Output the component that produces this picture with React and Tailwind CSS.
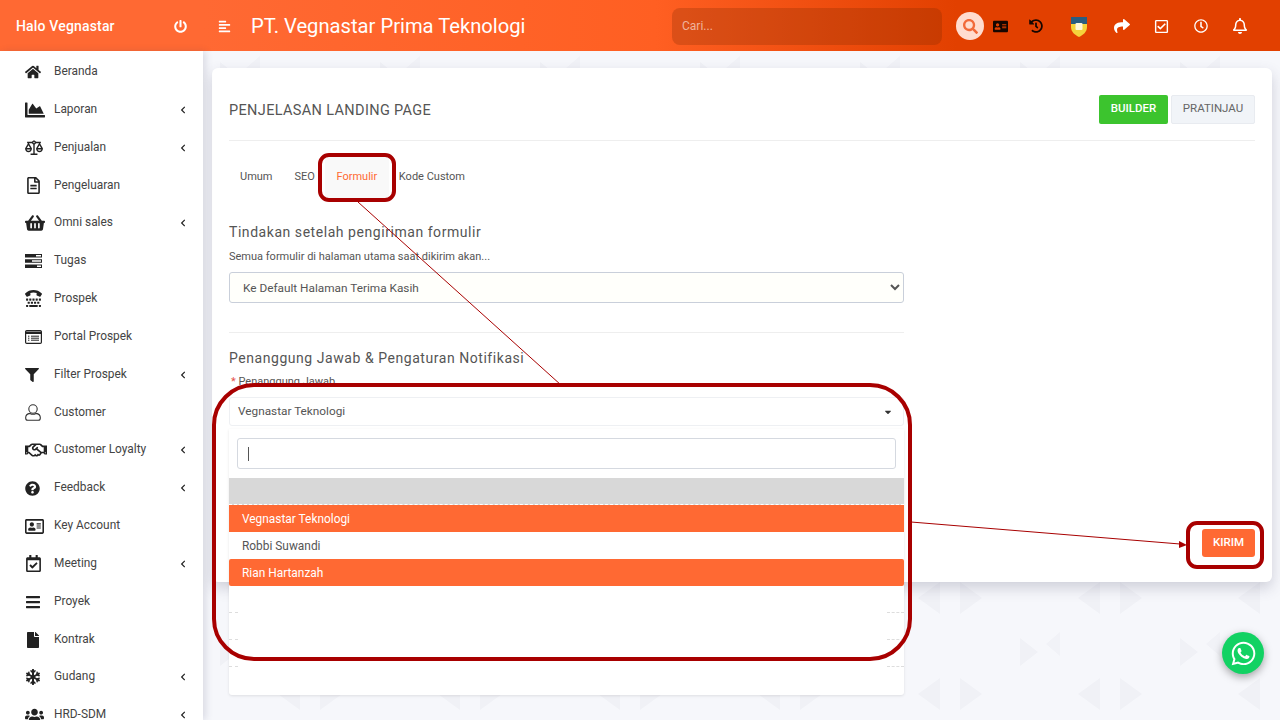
import {
  FaHome, FaChartArea, FaRegFileAlt, FaShoppingBasket, FaTty, FaFilter, FaRegHandshake,
  FaQuestionCircle, FaRegAddressCard, FaRegCalendarCheck, FaBars, FaFile, FaSnowflake,
  FaUsers, FaChevronLeft, FaPowerOff, FaAlignLeft, FaSearch, FaAddressCard, FaHistory,
  FaShare, FaRegCheckSquare, FaRegClock, FaRegBell, FaWhatsapp, FaCaretDown,
} from "react-icons/fa";
import { LiaBalanceScaleSolid } from "react-icons/lia";

// stacked bars with a notch, the "Tugas" icon
const TasksIcon = ({ className }) => (
  <svg className={className} width="17" height="14" viewBox="0 0 17 14" fill="#222">
    <path d="M0 0h17v3.6H0zM0 5.2h17v3.6H0zM0 10.4h17V14H0z" />
    <path d="M11 1h5v1.6h-5zM7 6.2h9v1.6H7zM12 11.4h4V13h-4z" fill="#fff" />
  </svg>
);

const PortalIcon = ({ className }) => (
  <svg className={className} width="17" height="14" viewBox="0 0 17 14">
    <rect x="0.6" y="0.6" width="15.8" height="12.8" rx="1.2" fill="#fff" stroke="#222" strokeWidth="1.2" />
    <path d="M0.6 1.6h15.8v2.4H0.6z" fill="#222" />
    <path d="M3 6.2h1.4M3 8.2h1.4M3 10.2h1.4M6 6.2h8M6 8.2h8M6 10.2h8" stroke="#222" strokeWidth="1" />
  </svg>
);

const UserIcon = ({ className }) => (
  <svg className={className} width="16" height="17" viewBox="0 0 16 17" fill="none" stroke="#333" strokeWidth="1.1">
    <circle cx="8" cy="5" r="4.2" />
    <path d="M5 9.4C2.5 9.8.7 11.4.7 13.6v.7c0 1.2.9 2 2 2h10.6c1.1 0 2-.8 2-2v-.7c0-2.2-1.8-3.800-4.300-4.200-1.800 1-4.200 1-6 0z" />
  </svg>
);

const menu = [
  { label: "Beranda", icon: FaHome, size: "text-[16px]" },
  { label: "Laporan", icon: FaChartArea, size: "text-[20px]", sub: true },
  { label: "Penjualan", icon: LiaBalanceScaleSolid, size: "text-[22px] -ml-[2px]", sub: true },
  { label: "Pengeluaran", icon: FaRegFileAlt, size: "text-[17px]" },
  { label: "Omni sales", icon: FaShoppingBasket, size: "text-[20px]", sub: true },
  { label: "Tugas", icon: TasksIcon, size: "" },
  { label: "Prospek", icon: FaTty, size: "text-[17px]" },
  { label: "Portal Prospek", icon: PortalIcon, size: "" },
  { label: "Filter Prospek", icon: FaFilter, size: "text-[14px]", sub: true },
  { label: "Customer", icon: UserIcon, size: "" },
  { label: "Customer Loyalty", icon: FaRegHandshake, size: "text-[22px]", sub: true },
  { label: "Feedback", icon: FaQuestionCircle, size: "text-[15px]", sub: true },
  { label: "Key Account", icon: FaRegAddressCard, size: "text-[19px]" },
  { label: "Meeting", icon: FaRegCalendarCheck, size: "text-[17px]", sub: true },
  { label: "Proyek", icon: FaBars, size: "text-[16px]" },
  { label: "Kontrak", icon: FaFile, size: "text-[16px]" },
  { label: "Gudang", icon: FaSnowflake, size: "text-[16px]", sub: true },
  { label: "HRD-SDM", icon: FaUsers, size: "text-[19px]", sub: true },
];

const tabs = ["Umum", "SEO", "Formulir", "Kode Custom"];

const Sidebar = () => (
  <aside className="w-[203px] shrink-0 flex flex-col z-10">
    <div className="h-[51px] shrink-0 bg-[#ff6933] flex items-center justify-between pl-4 pr-[16px] pt-[2px]">
      <span className="text-[14px] font-medium text-[#fff] tracking-[0.17px]">Halo Vegnastar</span>
      <FaPowerOff className="text-[13px] text-[#fff]" />
    </div>
    <nav className="flex-1 bg-white pt-[2px] overflow-hidden shadow-[3px_0_7px_rgba(60,60,90,0.14)]">
      {menu.map((item) => (
        <div key={item.label} className="h-[37.85px] flex items-center pl-[25px] pr-4">
          <span className="w-[29px] shrink-0 flex items-center">
            <item.icon className={`${item.size} text-[#222]`} />
          </span>
          <span className="text-[11.9px] text-[#444] flex-1">{item.label}</span>
          {item.sub && <FaChevronLeft className="text-[8px] text-[#222]" />}
        </div>
      ))}
    </nav>
  </aside>
);

const Topbar = () => (
  <header className="h-[51px] shrink-0 flex items-center bg-[linear-gradient(90deg,#ff6933_0%,#ff5f22_42%,#e24000_70%)] pl-[15px]">
    <FaAlignLeft className="text-[13px] text-white mr-[20px] mt-[1px]" />
    <h1 className="text-[20.2px] text-white font-normal w-[421px] mt-[2px]">PT. Vegnastar Prima Teknologi</h1>
    <div className="w-[270px] h-[37px] mt-[1px] rounded-[8px] bg-[rgba(120,40,0,0.25)] flex items-center pl-[10px] text-[12px] text-[#f0b39c]">
      Cari...
    </div>
    <div className="ml-[14px] w-[28px] h-[28px] mt-[1px] rounded-full bg-[#ffdccf] flex items-center justify-center">
      <FaSearch className="text-[15px] text-[#f26a3a]" />
    </div>
    <div className="flex items-center ml-[6px] mt-[1px] [&>*]:w-[20px] [&>*]:flex [&>*]:justify-center">
      <span><FaAddressCard className="text-[15px] text-[#160600]" /></span>
      <span className="ml-[16px]"><FaHistory className="text-[14px] text-[#160600]" /></span>
      <span className="ml-[23px]">
        <svg width="18" height="24" viewBox="0 0 18 24">
          <path d="M1 3h16v10c0 5-4 8-8 10-4-2-8-5-8-10z" fill="#f5d33b" />
          <path d="M1 3h16v7H1z" fill="#2b5d80" />
          <rect x="5.500" y="9" width="7" height="7" rx="1" fill="#fff6d8" />
        </svg>
      </span>
      <span className="ml-[23px]"><FaShare className="text-[16px] text-white" /></span>
      <span className="ml-[19px]"><FaRegCheckSquare className="text-[15px] text-white" /></span>
      <span className="ml-[20px]"><FaRegClock className="text-[14px] text-white" /></span>
      <span className="ml-[19px]"><FaRegBell className="text-[16px] text-white" /></span>
    </div>
  </header>
);

const Dropdown = () => (
  <div className="absolute left-0 right-0 top-[32px] h-[266px] bg-white rounded-b-[3px] shadow-[0_1px_3px_rgba(0,0,0,0.1)] z-10">
    <div className="h-[49px] px-2 pt-[9px]">
      <div className="h-[31px] border border-[#d5d9e0] rounded-[3px] flex items-center pl-[10px]">
        <span className="w-px h-[14px] bg-[#555]" />
      </div>
    </div>
    <div className="h-[27px] bg-[#d8d8d8] border-b border-dashed border-white" />
    <div className="h-[27px] bg-[#ff6933] text-white text-[11.9px] flex items-center pl-[13px] pt-[2px]">Vegnastar Teknologi</div>
    <div className="h-[27px] text-[#555] text-[11.9px] flex items-center pl-[13px] pt-[2px]">Robbi Suwandi</div>
    <div className="h-[27px] bg-[#ff6933] text-white text-[11.9px] flex items-center pl-[13px] pt-[2px] rounded-[2px]">Rian Hartanzah</div>
    {[0, 1, 2].map((row) => (
      <div key={row} className="h-[27px] flex items-end justify-between">
        <span className="w-[9px] border-t border-dashed border-[#ddd]" />
        <span className="w-[17px] border-t border-dashed border-[#ddd]" />
      </div>
    ))}
  </div>
);

// background texture, drawing only
const Pattern = () => (
  <svg className="absolute inset-0 w-full h-full" aria-hidden="true">
    <defs>
      <pattern id="tri" width="160" height="96" patternUnits="userSpaceOnUse" x="40" y="52">
        <path d="M20 10l18 14-18 14zM100 50l-22 16 22 16zM120 50l22 16-22 16z" fill="#f0f1f6" />
        <path d="M60 4l-14 12 14 12z" fill="#f1f2f7" />
      </pattern>
    </defs>
    <rect width="100%" height="100%" fill="url(#tri)" />
  </svg>
);

const Annotations = () => (
  <>
    <svg className="absolute inset-0 w-full h-full pointer-events-none z-20" aria-hidden="true">
      <line x1="358" y1="202" x2="561" y2="385" stroke="#a80000" strokeWidth="1" />
      <line x1="911" y1="522" x2="1180" y2="544" stroke="#a80000" strokeWidth="1" />
      <path d="M1187 545l-8-4v7z" fill="#a80000" />
    </svg>
    <div className="absolute left-[318px] top-[153px] w-[78px] h-[49px] border-4 border-[#a80000] rounded-[11px] z-20" />
    <div className="absolute left-[212px] top-[383px] w-[700px] h-[278px] border-4 border-[#a80000] rounded-[42px] z-20" />
    <div className="absolute left-[1186px] top-[521px] w-[78px] h-[48px] border-4 border-[#a80000] rounded-[11px] z-20" />
  </>
);

const App = () => (
  <div className="relative h-screen w-full overflow-hidden flex bg-[#f6f7fb] font-['Roboto',sans-serif]">
    <Pattern />
    <Sidebar />
    <div className="relative flex-1 min-w-0 flex flex-col">
      <Topbar />
      <main className="pl-[9px] pr-2 pt-[17px]">
        <section className="h-[514px] bg-white rounded-[6px] shadow-[0_6px_14px_rgba(70,70,100,0.22)] px-[17px] flex flex-col">
          <div className="h-[73px] shrink-0 flex items-center justify-between border-b border-[#eeeeee] pt-[10px]">
            <h2 className="text-[14.5px] text-[#555] tracking-[0.35px] mt-[4px]">PENJELASAN LANDING PAGE</h2>
            <div className="flex gap-[3px]">
              <button className="w-[69px] h-[29px] rounded-[2px] bg-[#3cc42e] text-white text-[11.5px] font-medium">BUILDER</button>
              <button className="w-[84px] h-[29px] rounded-[2px] bg-[#f1f4f8] border border-[#e8ebf0] text-[#666] text-[11.5px]">PRATINJAU</button>
            </div>
          </div>

          <div className="flex h-[43px] mt-[15px] text-[11px] text-[#555]">
            {tabs.map((tab) => (
              <div
                key={tab}
                className={
                  tab === "Formulir"
                    ? "w-[64px] ml-[10px] mr-[10px] flex items-center justify-center bg-[#f9f9f9] text-[#ff6933] border-b border-[#ee6a3c]"
                    : "flex items-center first:ml-[11px] first:mr-[22px]"
                }
              >
                {tab}
              </div>
            ))}
          </div>

          <div className="w-[675px]">
            <h3 className="text-[14px] text-[#555] tracking-[0.55px] mt-[23px] leading-[20px]">Tindakan setelah pengiriman formulir</h3>
            <p className="text-[11px] text-[#555] mt-[7px] leading-[16px]">Semua formulir di halaman utama saat dikirim akan...</p>
            <select
              defaultValue="default"
              className="block w-full h-[31px] mt-[7px] border border-[#c9cfda] rounded-[3px] bg-[#fffffb] text-[11.8px] text-[#555] pl-[9px] pr-2"
            >
              <option value="default">Ke Default Halaman Terima Kasih</option>
            </select>
            <div className="border-t border-[#eeeeee] mt-[29px]" />
            <h3 className="text-[14px] text-[#555] tracking-[0.55px] mt-[15px] leading-[20px]">Penanggung Jawab &amp; Pengaturan Notifikasi</h3>
            <label className="block text-[11px] text-[#555] mt-[6px] pl-[2px] leading-[16px]">
              <span className="text-[#e5534b]">*</span> Penanggung Jawab
            </label>
            <div className="relative mt-[7px]">
              <div className="h-[29px] border border-[#eef0f3] rounded-[3px] flex items-center justify-between pl-[8px] pr-[10px] text-[11.8px] text-[#555]">
                Vegnastar Teknologi
                <FaCaretDown className="text-[10px] text-[#333]" />
              </div>
              <Dropdown />
            </div>
          </div>

          <div className="mt-auto mb-[25px] flex justify-end">
            <button className="w-[53px] h-[28px] rounded-[3px] bg-[#ff6933] text-white text-[11.5px] font-medium">KIRIM</button>
          </div>
        </section>
      </main>
    </div>
    <Annotations />
    <button className="absolute left-[1222px] top-[632px] w-[42px] h-[42px] rounded-full bg-[#12d263] flex items-center justify-center shadow-[0_3px_8px_rgba(0,0,0,0.35)] z-30">
      <FaWhatsapp className="text-[27px] text-white" />
    </button>
  </div>
);

export default App;
